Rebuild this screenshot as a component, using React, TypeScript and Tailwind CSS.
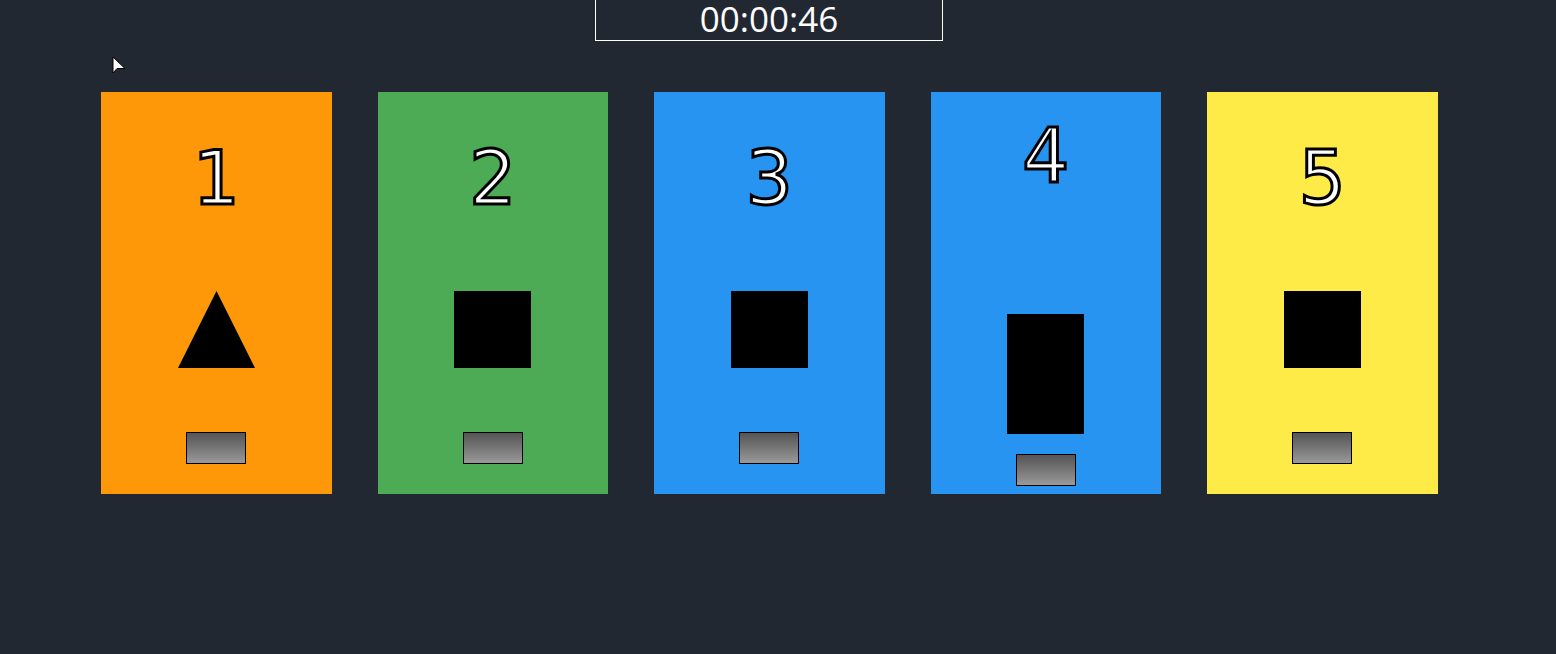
import React from "react";

type Card = {
  n: string;
  bg: string;
  shape: "tri" | "sq" | "tall";
};

const cards: Card[] = [
  { n: "1", bg: "bg-[#ff9808]", shape: "tri" },
  { n: "2", bg: "bg-[#4eab55]", shape: "sq" },
  { n: "3", bg: "bg-[#2894f2]", shape: "sq" },
  { n: "4", bg: "bg-[#2894f2]", shape: "tall" },
  { n: "5", bg: "bg-[#ffeb47]", shape: "sq" },
];

function Shape({ kind }: { kind: Card["shape"] }) {
  if (kind === "tri") {
    return (
      <svg width="77" height="77" viewBox="0 0 77 77" className="mt-[58px] block">
        <polygon points="38.5,0 77,77 0,77" fill="#000" />
      </svg>
    );
  }
  if (kind === "tall") {
    return <div className="mt-[103px] h-[120px] w-[77px] bg-black" />;
  }
  return <div className="mt-[58px] h-[77px] w-[77px] bg-black" />;
}

export default function App() {
  return (
    <div className="relative h-[654px] w-[1556px] overflow-hidden bg-[#222831] font-['Open_Sans','Noto_Sans',sans-serif]">
      <div className="ml-[595px] mt-[-1px] flex h-[42px] w-[348px] items-center justify-center border border-white text-[35px] leading-none text-white">
        <span className="mt-[-3px]">00:00:46</span>
      </div>

      <svg
        className="absolute left-[112px] top-[56px]"
        width="16"
        height="20"
        viewBox="0 0 16 20"
      >
        <polygon points="1,1 1,17 5,12.5 13,12.5" fill="#fff" stroke="#000" strokeWidth="1" strokeLinejoin="round" />
      </svg>

      <div className="ml-[101px] mt-[51px] flex gap-[46px]">
        {cards.map((c) => (
          <div
            key={c.n}
            className={`flex h-[402px] w-[230.5px] flex-col items-center justify-center ${c.bg}`}
          >
            <div className="flex h-[111px] items-center justify-center font-['DejaVu_Sans',sans-serif] text-[74px] leading-none text-white [-webkit-text-stroke:3px_black]">
              {c.n}
            </div>
            <Shape kind={c.shape} />
            <div
              className={`${c.shape === "tall" ? "mt-[20px]" : "mt-[64px]"} h-[32px] w-[60px] border border-black bg-gradient-to-b from-[#555555] to-[#9a9a9a]`}
            />
          </div>
        ))}
      </div>
    </div>
  );
}
